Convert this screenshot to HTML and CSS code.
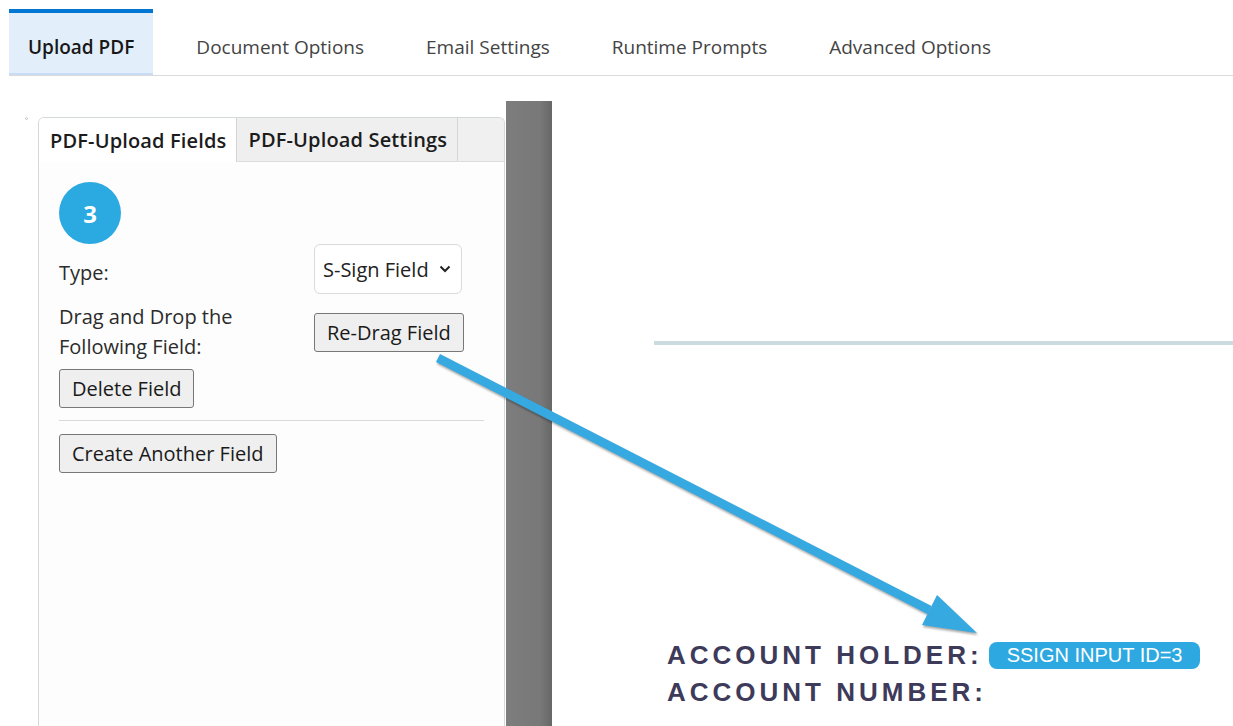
FILE: index.html
```html
<!DOCTYPE html>
<html lang="en">

<head>
    <meta charset="UTF-8">
    <meta name="viewport" content="width=device-width, initial-scale=1.0">
    <title>S-Sign Template - Upload PDF</title>
    <link rel="stylesheet" href="styles.css">
</head>

<body>

    <!-- Wizard tabs -->
    <nav class="wizard-tabs">
        <a class="wizard-tab active">Upload PDF</a>
        <a class="wizard-tab">Document Options</a>
        <a class="wizard-tab">Email Settings</a>
        <a class="wizard-tab">Runtime Prompts</a>
        <a class="wizard-tab">Advanced Options</a>
    </nav>

    <main class="workspace">

        <!-- Field editor on the left -->
        <aside class="sidebar">
            <span class="dot"></span>
            <section class="panel">
                <div class="panel-tabs">
                    <button class="panel-tab active">PDF-Upload Fields</button>
                    <button class="panel-tab">PDF-Upload Settings</button>
                </div>

                <div class="panel-body">
                    <div class="field-num">3</div>

                    <div class="form-row">
                        <label class="form-label label-type">Type:</label>
                        <div class="select-box">
                            <span>S-Sign Field</span>
                            <svg class="chevron" width="12" height="8" viewBox="0 0 12 8">
                                <path d="M1.5 1.5 L6 6 L10.5 1.5" fill="none" stroke="#222" stroke-width="2" />
                            </svg>
                        </div>
                    </div>

                    <div class="form-row row-top">
                        <label class="form-label">Drag and Drop the<br>Following Field:</label>
                        <button class="btn btn-redrag">Re-Drag Field</button>
                    </div>

                    <button class="btn btn-delete">Delete Field</button>
                    <hr class="divider">
                    <button class="btn">Create Another Field</button>
                </div>
            </section>
        </aside>

        <!-- resize handle -->
        <div class="splitter"></div>

        <!-- PDF page preview -->
        <section class="doc">
            <div class="doc-rule"></div>
            <div class="doc-fields">
                <div class="doc-line">
                    <span>ACCOUNT HOLDER:</span>
                    <span class="ssign-tag">SSIGN INPUT ID=3</span>
                </div>
                <div class="doc-line">
                    <span>ACCOUNT NUMBER:</span>
                </div>
            </div>
        </section>
    </main>

    <!-- annotation arrow drawn over the page -->
    <svg class="annotation" width="1233" height="726" viewBox="0 0 1233 726">
        <g class="arrow">
            <polygon points="440,354 931.5,606 927.5,614 436,362" />
            <polygon points="937,595 977,633 922,625" />
        </g>
    </svg>

</body>

</html>
```

FILE: styles.css
```css
/* Base */
body,
html {
    margin: 0;
    padding: 0;
    background-color: white;
    font-family: "Open Sans", "Noto Sans", sans-serif;
    color: #222;
    overflow: hidden;
}

/* Top wizard tabs */
.wizard-tabs {
    display: flex;
    gap: 24px;
    margin: 9px 0 0 9px;
    border-bottom: 1px solid #d9d9d9;
}

.wizard-tab {
    padding: 22px 19px 14px;
    border-top: 4px solid transparent;
    border-bottom: 2px solid transparent;
    font-size: 19px;
    line-height: 24px;
    color: #444;
    cursor: pointer;
}

.wizard-tab.active {
    background-color: #e3eefb;
    border-top-color: #0176d3;
    border-bottom-color: #c8dcf5;
    color: #181818;
    font-weight: 600;
}

/* Workspace */
.workspace {
    display: flex;
    margin-top: 25px;
    margin-left: 9px;
    height: 625px;
}

.sidebar {
    display: flex;
    align-items: flex-start;
    width: 497px;
    padding: 16px 1px 0 16px;
    box-sizing: border-box;
}

.dot {
    width: 3px;
    height: 3px;
    margin-right: 10px;
    border: 1px solid #c4c4c4;
    border-radius: 50%;
    box-sizing: border-box;
}

.panel {
    flex: 1;
    min-height: 620px;
    border: 1px solid #d3d9db;
    border-bottom: none;
    border-radius: 6px 6px 0 0;
    background-color: #fdfdfd;
}

/* Inner tabs */
.panel-tabs {
    display: flex;
    height: 43px;
    background-color: #f0f0f0;
    border-bottom: 1px solid #dcdcdc;
    border-radius: 5px 5px 0 0;
}

.panel-tab {
    padding: 0 10px 0 11px;
    border: none;
    border-right: 1px solid #d6d6d6;
    background-color: #efefef;
    font-family: "Open Sans", sans-serif;
    font-size: 20px;
    letter-spacing: 0.15px;
    font-weight: 600;
    color: #1c1c1c;
}

.panel-tab.active {
    height: 44px;
    background-color: white;
    border-radius: 5px 0 0 0;
}

.panel-body {
    padding: 20px 20px 0;
}

.field-num {
    width: 62px;
    height: 62px;
    border-radius: 50%;
    background-color: #2ba9e1;
    color: white;
    font-size: 24px;
    font-weight: 700;
    display: flex;
    align-items: center;
    justify-content: center;
}

.form-row {
    display: grid;
    grid-template-columns: 255px auto;
    align-items: center;
    justify-items: start;
}

.row-top {
    align-items: start;
    margin-top: 8px;
}

.form-label {
    font-size: 20px;
    line-height: 30px;
    color: #2b2b2b;
}

.label-type {
    padding-top: 8px;
}

.select-box {
    display: flex;
    align-items: center;
    justify-content: space-between;
    width: 148px;
    height: 50px;
    padding: 0 10px 0 8px;
    box-sizing: border-box;
    border: 1px solid #dadada;
    border-radius: 6px;
    background-color: white;
    font-size: 20px;
    color: #222;
}

/* Buttons */
.btn {
    display: block;
    height: 39px;
    padding: 0 12px;
    border: 1px solid #777;
    border-radius: 3px;
    background-color: #efefef;
    font-family: "Open Sans", sans-serif;
    font-size: 20px;
    color: #1a1a1a;
    cursor: pointer;
}

.btn-redrag {
    margin-top: 11px;
}

.btn-delete {
    margin-top: 7px;
}

.divider {
    margin: 12px 0 13px;
    border: none;
    border-top: 1px solid #d6dadc;
}

/* Splitter */
.splitter {
    width: 46px;
    background: linear-gradient(90deg, #7d7d7d 0%, #787878 75%, #676767 100%);
}

/* Document preview */
.doc {
    flex: 1;
    background-color: white;
}

.doc-rule {
    height: 4px;
    margin: 240px 0 0 102px;
    background-color: #cbdbe0;
}

.doc-fields {
    margin: 292px 0 0 115px;
}

.doc-line {
    display: flex;
    align-items: center;
    height: 37px;
    font-family: "Liberation Sans", Arial, sans-serif;
    font-size: 26px;
    font-weight: 700;
    letter-spacing: 4px;
    color: #3d3a5a;
}

.ssign-tag {
    display: inline-flex;
    align-items: center;
    height: 27px;
    margin-left: 6px;
    padding: 0 18px;
    border-radius: 8px;
    background-color: #2ea8e0;
    font-size: 20px;
    font-weight: 400;
    letter-spacing: 0;
    color: white;
}

/* Arrow overlay */
.annotation {
    position: absolute;
    top: 0;
    left: 0;
    pointer-events: none;
}

.arrow {
    fill: #36a9e1;
    filter: drop-shadow(1px 2px 1px rgba(0, 0, 0, 0.35));
}
```
